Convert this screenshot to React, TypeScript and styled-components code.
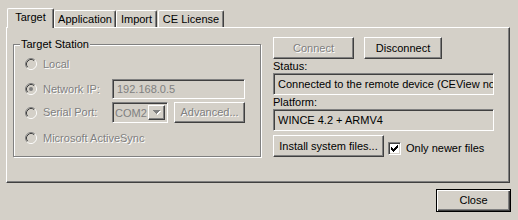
import React from "react";
import styled, { createGlobalStyle, css } from "styled-components";

const Global = createGlobalStyle`
  html, body {
    margin: 0;
    padding: 0;
    background: #d4d0c8;
    width: 518px;
    height: 220px;
    overflow: hidden;
  }
  body {
    font-family: "Liberation Sans", Arial, sans-serif;
    font-size: 11px;
    color: #000;
  }
  * { box-sizing: border-box; }
`;

const disabledText = css`
  color: #808080;
  text-shadow: 1px 1px 0 #fff;
`;

const Window = styled.div`
  width: 518px;
  height: 220px;
  display: flex;
  flex-direction: column;
  padding-top: 8px;
`;

const TabStrip = styled.div`
  display: flex;
  align-items: flex-end;
  height: 19px;
  padding-left: 7px;
`;

const Tab = styled.div<{ $w: number; $active?: boolean; $ml?: number }>`
  width: ${(p) => p.$w}px;
  height: ${(p) => (p.$active ? 20 : 17)}px;
  margin-left: ${(p) => p.$ml ?? 0}px;
  margin-bottom: ${(p) => (p.$active ? -1 : 0)}px;
  position: relative;
  z-index: ${(p) => (p.$active ? 1 : 0)};
  background: #d4d0c8;
  border-top: 1px solid #fff;
  border-left: 1px solid #fff;
  border-right: 1px solid #404040;
  border-radius: 2px 2px 0 0;
  box-shadow: inset -1px 0 0 #808080;
  display: flex;
  justify-content: center;
  align-items: ${(p) => (p.$active ? "flex-start" : "center")};
  padding-top: ${(p) => (p.$active ? 2 : 1)}px;
  line-height: 13px;
  white-space: nowrap;
`;

const Panel = styled.div`
  margin-left: 6px;
  width: 504px;
  height: 156px;
  border-top: 1px solid #fff;
  border-left: 1px solid #fff;
  border-right: 1px solid #404040;
  border-bottom: 1px solid #404040;
  box-shadow: inset -1px -1px 0 #808080;
  display: flex;
  align-items: flex-start;
  padding-left: 6px;
`;

const GroupBox = styled.div`
  position: relative;
  margin-top: 16px;
  width: 248px;
  height: 113px;
  border: 1px solid #808080;
  box-shadow: inset 1px 1px 0 #fff, 1px 1px 0 #fff;
  padding: 9px 0 0 11px;
  display: flex;
  flex-direction: column;
`;

const GroupTitle = styled.span`
  position: absolute;
  top: -7px;
  left: 6px;
  padding: 0 1px;
  background: #d4d0c8;
  line-height: 13px;
`;

const Row = styled.div<{ $h: number; $mt?: number }>`
  display: flex;
  align-items: center;
  height: ${(p) => p.$h}px;
  margin-top: ${(p) => p.$mt ?? 0}px;
`;

const RadioLabel = styled.label<{ $w?: number; $disabled?: boolean }>`
  display: flex;
  align-items: center;
  gap: 6px;
  width: ${(p) => (p.$w ? `${p.$w}px` : "auto")};
  line-height: 13px;
  white-space: nowrap;
  ${(p) => p.$disabled && disabledText}
`;

const Sunken = css`
  border: 1px solid;
  border-color: #808080 #fff #fff #808080;
  box-shadow: inset 1px 1px 0 #404040, inset -1px -1px 0 #d4d0c8;
`;

const TextField = styled.div<{ $w: number; $h: number; $disabled?: boolean }>`
  ${Sunken}
  width: ${(p) => p.$w}px;
  height: ${(p) => p.$h}px;
  background: #d4d0c8;
  padding-left: 4px;
  display: flex;
  align-items: center;
  white-space: nowrap;
  overflow: hidden;
  color: ${(p) => (p.$disabled ? "#808080" : "#000")};
`;

const Combo = styled.div<{ $w: number; $h: number }>`
  ${Sunken}
  width: ${(p) => p.$w}px;
  height: ${(p) => p.$h}px;
  background: #d4d0c8;
  display: flex;
  align-items: stretch;
  padding: 2px 2px 2px 1px;
  color: #808080;
`;

const ComboText = styled.span`
  flex: 1;
  display: flex;
  align-items: center;
  padding-left: 1px;
`;

const ComboButton = styled.span`
  width: 17px;
  border: 1px solid;
  border-color: #fff #404040 #404040 #fff;
  box-shadow: inset -1px -1px 0 #808080;
  display: flex;
  align-items: center;
  justify-content: center;
`;

const Button = styled.button<{ $w: number; $h: number; $ml?: number; $default?: boolean }>`
  width: ${(p) => p.$w}px;
  height: ${(p) => p.$h}px;
  margin: 0 0 0 ${(p) => p.$ml ?? 0}px;
  padding: 0;
  background: #d4d0c8;
  font: inherit;
  color: #000;
  border: 1px solid;
  border-color: #fff #404040 #404040 #fff;
  box-shadow: inset -1px -1px 0 #808080;
  display: flex;
  align-items: center;
  justify-content: center;
  white-space: nowrap;
  line-height: 13px;
  ${(p) =>
    p.$default &&
    css`
      border-color: #000;
      box-shadow: inset 1px 1px 0 #fff, inset -1px -1px 0 #404040, inset -2px -2px 0 #808080;
    `}
  &:disabled {
    ${disabledText}
  }
`;

const RightColumn = styled.div`
  margin-top: 9px;
  margin-left: 12px;
  width: 221px;
  display: flex;
  flex-direction: column;
`;

const ButtonRow = styled.div`
  display: flex;
  gap: 10px;
`;

const FieldLabel = styled.div`
  height: 14px;
  line-height: 14px;
`;

const InstallRow = styled.div`
  display: flex;
  align-items: flex-start;
  margin-top: 4px;
`;

const CheckWrap = styled.label`
  display: flex;
  align-items: center;
  gap: 5px;
  margin: 7px 0 0 4px;
  line-height: 13px;
  white-space: nowrap;
`;

const CheckBox = styled.span`
  ${Sunken}
  width: 13px;
  height: 13px;
  background: #fff;
  position: relative;
  display: block;
  flex: none;
`;

const Footer = styled.div`
  display: flex;
  justify-content: flex-end;
  padding-right: 7px;
  margin-top: 6px;
`;

const Radio = ({ checked }: { checked?: boolean }) => (
  <svg width="12" height="12" viewBox="0 0 12 12" style={{ flex: "none" }}>
    <circle cx="6" cy="6" r="4.5" fill="#d4d0c8" />
    <path d="M2.11 9.89 A5.5 5.5 0 0 1 9.89 2.11" fill="none" stroke="#808080" strokeWidth="1" />
    <path d="M9.89 2.11 A5.5 5.5 0 0 1 2.11 9.89" fill="none" stroke="#ffffff" strokeWidth="1" />
    <path d="M2.82 9.18 A4.5 4.5 0 0 1 9.18 2.82" fill="none" stroke="#404040" strokeWidth="1" />
    <path d="M9.18 2.82 A4.5 4.5 0 0 1 2.82 9.18" fill="none" stroke="#d4d0c8" strokeWidth="1" />
    {checked && <circle cx="6" cy="6" r="2" fill="#808080" />}
  </svg>
);

const ArrowDown = () => (
  <svg width="8" height="5" viewBox="0 0 8 5" shapeRendering="crispEdges">
    <rect x="1" y="1" width="7" height="1" fill="#fff" />
    <rect x="2" y="2" width="5" height="1" fill="#fff" />
    <rect x="3" y="3" width="3" height="1" fill="#fff" />
    <rect x="4" y="4" width="1" height="1" fill="#fff" />
    <rect x="0" y="0" width="7" height="1" fill="#808080" />
    <rect x="1" y="1" width="5" height="1" fill="#808080" />
    <rect x="2" y="2" width="3" height="1" fill="#808080" />
    <rect x="3" y="3" width="1" height="1" fill="#808080" />
  </svg>
);

const CheckMark = () => (
  <svg
    width="7"
    height="7"
    viewBox="0 0 7 7"
    shapeRendering="crispEdges"
    style={{ position: "absolute", left: 2, top: 2 }}
  >
    <rect x="6" y="0" width="1" height="3" fill="#000" />
    <rect x="5" y="1" width="1" height="3" fill="#000" />
    <rect x="4" y="2" width="1" height="3" fill="#000" />
    <rect x="3" y="3" width="1" height="3" fill="#000" />
    <rect x="2" y="4" width="1" height="3" fill="#000" />
    <rect x="1" y="3" width="1" height="3" fill="#000" />
    <rect x="0" y="2" width="1" height="3" fill="#000" />
  </svg>
);

export default function App() {
  return (
    <>
      <Global />
      <Window>
        <TabStrip>
          <Tab $w={47} $active>
            Target
          </Tab>
          <Tab $w={62}>Application</Tab>
          <Tab $w={41}>Import</Tab>
          <Tab $w={66} $ml={1}>
            CE License
          </Tab>
        </TabStrip>
        <Panel>
          <GroupBox>
            <GroupTitle>Target Station</GroupTitle>
            <Row $h={20}>
              <RadioLabel $disabled>
                <Radio />
                Local
              </RadioLabel>
            </Row>
            <Row $h={20} $mt={5}>
              <RadioLabel $w={87} $disabled>
                <Radio checked />
                Network IP:
              </RadioLabel>
              <TextField $w={133} $h={20} $disabled>
                192.168.0.5
              </TextField>
            </Row>
            <Row $h={21} $mt={3}>
              <RadioLabel $w={87} $disabled>
                <Radio />
                Serial Port:
              </RadioLabel>
              <Combo $w={56} $h={21}>
                <ComboText>COM2</ComboText>
                <ComboButton>
                  <ArrowDown />
                </ComboButton>
              </Combo>
              <Button $w={71} $h={21} $ml={6} disabled>
                Advanced...
              </Button>
            </Row>
            <Row $h={20} $mt={5}>
              <RadioLabel $disabled>
                <Radio />
                Microsoft ActiveSync
              </RadioLabel>
            </Row>
          </GroupBox>
          <RightColumn>
            <ButtonRow>
              <Button $w={81} $h={22} disabled>
                Connect
              </Button>
              <Button $w={78} $h={22}>
                Disconnect
              </Button>
            </ButtonRow>
            <FieldLabel>Status:</FieldLabel>
            <TextField $w={221} $h={22}>
              Connected to the remote device (CEView not started)
            </TextField>
            <FieldLabel>Platform:</FieldLabel>
            <TextField $w={221} $h={22}>
              WINCE 4.2 + ARMV4
            </TextField>
            <InstallRow>
              <Button $w={111} $h={22}>
                Install system files...
              </Button>
              <CheckWrap>
                <CheckBox>
                  <CheckMark />
                </CheckBox>
                Only newer files
              </CheckWrap>
            </InstallRow>
          </RightColumn>
        </Panel>
        <Footer>
          <Button $w={75} $h={23} $default>
            Close
          </Button>
        </Footer>
      </Window>
    </>
  );
}
